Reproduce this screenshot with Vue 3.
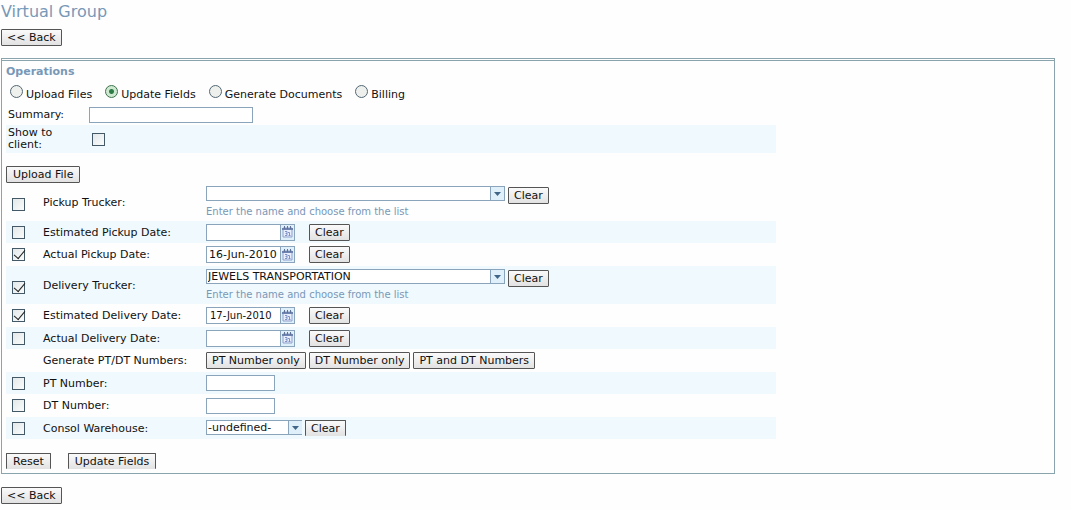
<script setup>
import { reactive, ref } from 'vue'

const operations = ['Upload Files', 'Update Fields', 'Generate Documents', 'Billing']
const operation = ref('Update Fields')
const summary = ref('')
const showToClient = ref(false)
const hint = 'Enter the name and choose from the list'

const fields = reactive([
  { id: 'pickup-trucker', label: 'Pickup Trucker:', kind: 'combo', on: false, value: '' },
  { id: 'est-pickup', label: 'Estimated Pickup Date:', kind: 'date', on: false, value: '' },
  { id: 'act-pickup', label: 'Actual Pickup Date:', kind: 'date', on: true, value: '16-Jun-2010' },
  { id: 'delivery-trucker', label: 'Delivery Trucker:', kind: 'combo', on: true, value: 'JEWELS TRANSPORTATION' },
  { id: 'est-delivery', label: 'Estimated Delivery Date:', kind: 'date', on: true, value: '17-Jun-2010', compact: true },
  { id: 'act-delivery', label: 'Actual Delivery Date:', kind: 'date', on: false, value: '' },
  { id: 'generate', label: 'Generate PT/DT Numbers:', kind: 'actions' },
  { id: 'pt-number', label: 'PT Number:', kind: 'text', on: false, value: '' },
  { id: 'dt-number', label: 'DT Number:', kind: 'text', on: false, value: '' },
  { id: 'warehouse', label: 'Consol Warehouse:', kind: 'select', on: false, value: '-undefined-' },
])
const actions = ['PT Number only', 'DT Number only', 'PT and DT Numbers']
</script>

<template>
  <main class="page">
    <h1>Virtual Group</h1>
    <button type="button" class="btn">&lt;&lt; Back</button>

    <section class="panel">
      <h2>Operations</h2>
      <div class="radios">
        <label v-for="name in operations" :key="name" class="radio">
          <input v-model="operation" type="radio" name="operation" :value="name" />
          <span>{{ name }}</span>
        </label>
      </div>

      <div class="row meta">
        <label for="summary">Summary:</label>
        <input id="summary" v-model="summary" type="text" class="box summary" />
      </div>
      <div class="row meta client striped">
        <label for="client">Show to client:</label>
        <input id="client" v-model="showToClient" type="checkbox" class="check" />
      </div>

      <button type="button" class="btn roomy upload">Upload File</button>

      <div
        v-for="(field, i) in fields"
        :key="field.id"
        class="row field"
        :class="{ striped: i % 2, tall: field.kind === 'combo' }"
      >
        <span class="tick">
          <input
            v-if="field.kind !== 'actions'"
            v-model="field.on"
            type="checkbox"
            class="check"
            :aria-label="field.label"
          />
        </span>
        <span v-if="field.kind === 'actions'" class="name">{{ field.label }}</span>
        <label v-else class="name" :for="field.id">{{ field.label }}</label>

        <div v-if="field.kind === 'combo'" class="stack">
          <div class="controls">
            <span class="picker wide">
              <input :id="field.id" v-model="field.value" type="text" />
              <button type="button" class="trigger" aria-label="Open list">
                <svg width="7" height="4" viewBox="0 0 7 4"><path d="M0 0h7L3.5 4z" fill="#3f6688" /></svg>
              </button>
            </span>
            <button type="button" class="btn" @click="field.value = ''">Clear</button>
          </div>
          <p class="hint">{{ hint }}</p>
        </div>

        <div v-else-if="field.kind === 'date'" class="controls dates">
          <span class="picker date">
            <input :id="field.id" v-model="field.value" type="text" :class="{ compact: field.compact }" />
            <button type="button" class="trigger" aria-label="Choose date">
              <svg width="11" height="12" viewBox="0 0 11 12">
                <path d="M1 2h9v9H1z" fill="#e8eefb" stroke="#8c9fcb" />
                <path d="M0 2h11v2H0z" fill="#6f83b0" />
                <path d="M2.5 0v3M5.5 0v3M8.5 0v3" stroke="#5f7196" />
                <path d="M3 5.500h2v4H3M3.500 7.500H5M6 6.500h1.500v3M6.500 9.500h2" fill="none" stroke="#7f92c6" />
              </svg>
            </button>
          </span>
          <button type="button" class="btn" @click="field.value = ''">Clear</button>
        </div>

        <div v-else-if="field.kind === 'actions'" class="controls">
          <button v-for="name in actions" :key="name" type="button" class="btn">{{ name }}</button>
        </div>

        <input v-else-if="field.kind === 'text'" :id="field.id" v-model="field.value" type="text" class="box" />

        <div v-else class="controls">
          <span class="picker list">
            <select :id="field.id" v-model="field.value">
              <option>-undefined-</option>
            </select>
            <span class="trigger">
              <svg width="7" height="4" viewBox="0 0 7 4"><path d="M0 0h7L3.500 4z" fill="#3f6688" /></svg>
            </span>
          </span>
          <button type="button" class="btn open" @click="field.value = '-undefined-'">Clear</button>
        </div>
      </div>

      <div class="footer">
        <button type="button" class="btn roomy open">Reset</button>
        <button type="button" class="btn roomy open">Update Fields</button>
      </div>
    </section>

    <button type="button" class="btn">&lt;&lt; Back</button>
  </main>
</template>

<style>
body {
  margin: 0;
  background: #fefefe;
}
</style>

<style scoped>
.page {
  padding: 4px 16px 6px 1px;
  color: #111;
  font: 11px/12px "DejaVu Sans", Verdana, sans-serif;
}
.page * {
  box-sizing: border-box;
}
h1 {
  margin: 0 0 9px;
  color: #7898b8;
  font-size: 16px;
  font-weight: 400;
  line-height: 16px;
}
h2 {
  margin: 0;
  color: #7898b8;
  font-size: 11px;
  line-height: 14px;
}
input,
select,
button {
  margin: 0;
  padding: 0;
  border: 0;
  border-radius: 0;
  color: inherit;
  font: inherit;
}
.btn {
  display: block;
  flex: none;
  height: 17px;
  padding: 1px 5px 0;
  border: 1px solid #555;
  border-radius: 1px;
  background: linear-gradient(#fafafa, #e2e2e2);
  line-height: 14px;
  white-space: nowrap;
}
.btn.roomy {
  padding: 1px 6px 0;
}
.btn.open {
  height: 16px;
  border-bottom: 0;
}
.panel {
  margin: 12px 0 13px;
  padding: 4px;
  border: 1px solid #8aa4ae;
  border-top: 3px double #8aa4ae;
}
.radios {
  display: flex;
  gap: 13px;
  height: 26px;
  padding: 6px 0 0 4px;
}
.radio {
  display: flex;
  gap: 3px;
}
.radio span {
  padding-top: 4px;
}
.radio input {
  width: 13px;
  height: 13px;
  appearance: none;
  border: 1px solid #536773;
  border-radius: 50%;
  background: #eef0ee;
}
.radio input:checked {
  border-color: #3d7349;
  background: radial-gradient(circle, #2f7d46 0 2px, #cfe8d2 3px);
}
.row {
  display: flex;
  max-width: 770px;
}
.striped {
  background: #f0f9fd;
}
.meta {
  align-items: center;
  height: 20px;
  padding-left: 2px;
}
.meta label {
  width: 60px;
  margin-right: 21px;
}
.client {
  height: 28px;
}
.client .check {
  margin-left: 3px;
}
.box {
  width: 69px;
  height: 16px;
  padding: 0 3px;
  border: 1px solid #8aa4bc;
  background: #fff;
}
.summary {
  width: 164px;
}
.check {
  display: block;
  width: 13px;
  height: 13px;
  appearance: none;
  border: 1px solid #435967;
  background: linear-gradient(135deg, #e4e8e8, #fafcfc);
}
.check:checked::before {
  display: block;
  width: 10px;
  height: 5px;
  margin: 1px 0 0 1px;
  border: solid #222;
  border-width: 0 0 1px 1px;
  transform: rotate(-50deg);
  content: "";
}
.upload {
  margin: 13px 0 0;
}
.field {
  align-items: center;
  height: 23px;
}
.field.striped {
  height: 22px;
}
.field.tall {
  height: 38px;
}
.tick {
  width: 37px;
  padding-left: 6px;
}
.tall .tick {
  padding-top: 4px;
}
.name {
  width: 163px;
  padding-top: 1px;
}
.controls {
  display: flex;
  gap: 3px;
}
.dates {
  gap: 14px;
}
.stack .btn {
  margin-top: 1px;
}
.picker {
  display: flex;
  height: 17px;
  border: 1px solid #8aa4bc;
  background: #fff;
}
.picker input,
.picker select {
  flex: 1;
  min-width: 0;
  appearance: none;
  background: transparent;
  padding: 0 2px;
}
.picker .compact {
  padding: 0 3px;
  font-size: 10px;
}
.wide {
  width: 299px;
  height: 15px;
}
.wide input {
  padding: 0 1px;
}
.date {
  width: 89px;
}
.list {
  width: 96px;
  height: 15px;
  border-right: 0;
}
.list select {
  padding: 0 1px;
  line-height: 13px;
}
.trigger {
  display: flex;
  flex: none;
  align-items: center;
  justify-content: center;
  width: 14px;
  border-left: 1px solid #8aa4bc;
  background: #e0f0fa;
}
.hint {
  margin: 2px 0 0;
  color: #7898b8;
  font-size: 10px;
  line-height: 12px;
}
.footer {
  display: flex;
  gap: 17px;
  margin-top: 14px;
}
</style>
